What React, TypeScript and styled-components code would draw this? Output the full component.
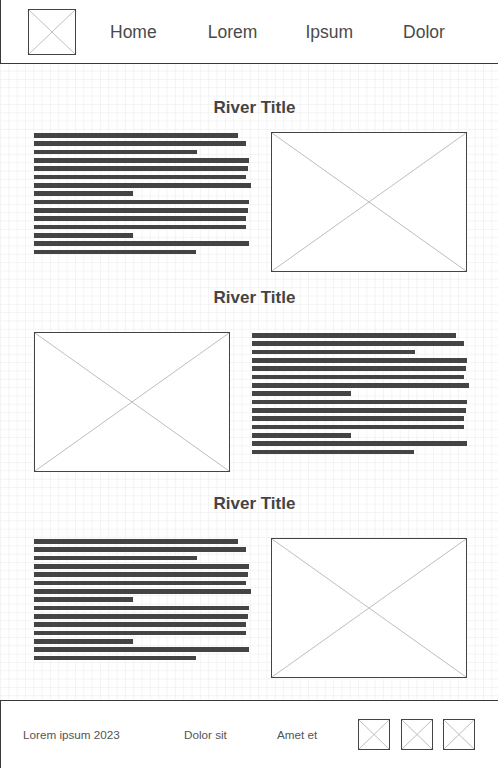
import * as React from 'react'
import styled, { createGlobalStyle } from 'styled-components'

const GlobalStyle = createGlobalStyle`
  html, body {
    margin: 0;
    padding: 0;
  }
  body {
    font-family: "Liberation Sans", Arial, sans-serif;
    color: #444;
    background-color: #fff;
    background-image:
      linear-gradient(to right, #f3f3f3 1px, transparent 1px),
      linear-gradient(to bottom, #f3f3f3 1px, transparent 1px);
    background-size: 8.33px 8.33px;
    background-position: 0 4px;
    overflow: hidden;
  }
`

const Page = styled.div`
  width: 498px;
  min-height: 768px;
  display: flex;
  flex-direction: column;
`

const Header = styled.header`
  box-sizing: border-box;
  height: 64px;
  background: #fff;
  border-left: 1.3px solid #3a3a3a;
  border-bottom: 1.3px solid #3a3a3a;
  display: flex;
  align-items: center;
  padding-left: 27px;
`

const PlaceholderBox = styled.div<{ $w: number; $h: number }>`
  box-sizing: border-box;
  width: ${({ $w }) => $w}px;
  height: ${({ $h }) => $h}px;
  border: 1.3px solid #444;
  background: #fff;
  flex-shrink: 0;

  svg {
    display: block;
    width: 100%;
    height: 100%;
  }
`

const Nav = styled.nav`
  display: flex;
  margin-left: 34px;
  margin-top: 1px;
`

const NavItem = styled.span`
  width: 97.7px;
  font-size: 17.5px;
  color: #4a4a4a;
`

const Main = styled.main`
  flex: 1;
  padding: 34px 0 22px;
`

const Section = styled.section<{ $top: number }>`
  margin-top: ${({ $top }) => $top}px;
`

const Title = styled.h2`
  margin: 0;
  padding-left: 11px;
  text-align: center;
  font-size: 17px;
  line-height: 20px;
  font-weight: bold;
  color: #444;
`

const Row = styled.div<{ $top: number; $gap: number }>`
  display: flex;
  align-items: flex-start;
  margin-top: ${({ $top }) => $top}px;
  padding-left: 34px;
  gap: ${({ $gap }) => $gap}px;
`

const TextBlock = styled.div`
  width: 217px;
  padding-top: 1px;
  display: flex;
  flex-direction: column;
  gap: 3.85px;
`

const TextLine = styled.div`
  height: 4.5px;
  background: #444;
`

const Footer = styled.footer`
  box-sizing: border-box;
  height: 68px;
  background: #fff;
  border-left: 1.3px solid #3a3a3a;
  border-top: 1.3px solid #3a3a3a;
  display: flex;
  align-items: center;
  padding-left: 22px;
  padding-bottom: 1px;
`

const FooterText = styled.span<{ $w: number }>`
  width: ${({ $w }) => $w}px;
  font-size: 11.7px;
  color: #555;
`

const SocialRow = styled.div`
  display: flex;
  gap: 10.5px;
`

const lineWidths = [204, 212, 163, 215, 214, 212, 217, 99, 215, 214, 212, 212, 99, 215, 162]

function Placeholder({ w, h }: { w: number; h: number }) {
  return (
    <PlaceholderBox $w={w} $h={h}>
      <svg viewBox="0 0 100 100" preserveAspectRatio="none">
        <line x1="0" y1="0" x2="100" y2="100" stroke="#bdbdbd" strokeWidth="1" vectorEffect="non-scaling-stroke" />
        <line x1="100" y1="0" x2="0" y2="100" stroke="#bdbdbd" strokeWidth="1" vectorEffect="non-scaling-stroke" />
      </svg>
    </PlaceholderBox>
  )
}

function Paragraph() {
  return (
    <TextBlock>
      {lineWidths.map((w, i) => (
        <TextLine key={i} style={{ width: w }} />
      ))}
    </TextBlock>
  )
}

interface IRiverProps {
  top: number
  rowTop: number
  imageFirst?: boolean
}

function River({ top, rowTop, imageFirst }: IRiverProps) {
  return (
    <Section $top={top}>
      <Title>River Title</Title>
      {imageFirst ? (
        <Row $top={rowTop} $gap={22}>
          <Placeholder w={196} h={140} />
          <Paragraph />
        </Row>
      ) : (
        <Row $top={rowTop} $gap={20}>
          <Paragraph />
          <Placeholder w={196} h={140} />
        </Row>
      )}
    </Section>
  )
}

export default function App() {
  return (
    <Page>
      <GlobalStyle />
      <Header>
        <Placeholder w={48} h={46} />
        <Nav>
          <NavItem>Home</NavItem>
          <NavItem>Lorem</NavItem>
          <NavItem>Ipsum</NavItem>
          <NavItem>Dolor</NavItem>
        </Nav>
      </Header>
      <Main>
        <River top={0} rowTop={14} />
        <River top={16} rowTop={24} imageFirst />
        <River top={22} rowTop={24} />
      </Main>
      <Footer>
        <FooterText $w={161}>Lorem ipsum 2023</FooterText>
        <FooterText $w={93}>Dolor sit</FooterText>
        <FooterText $w={81}>Amet et</FooterText>
        <SocialRow>
          <Placeholder w={32} h={31} />
          <Placeholder w={32} h={31} />
          <Placeholder w={32} h={31} />
        </SocialRow>
      </Footer>
    </Page>
  )
}
